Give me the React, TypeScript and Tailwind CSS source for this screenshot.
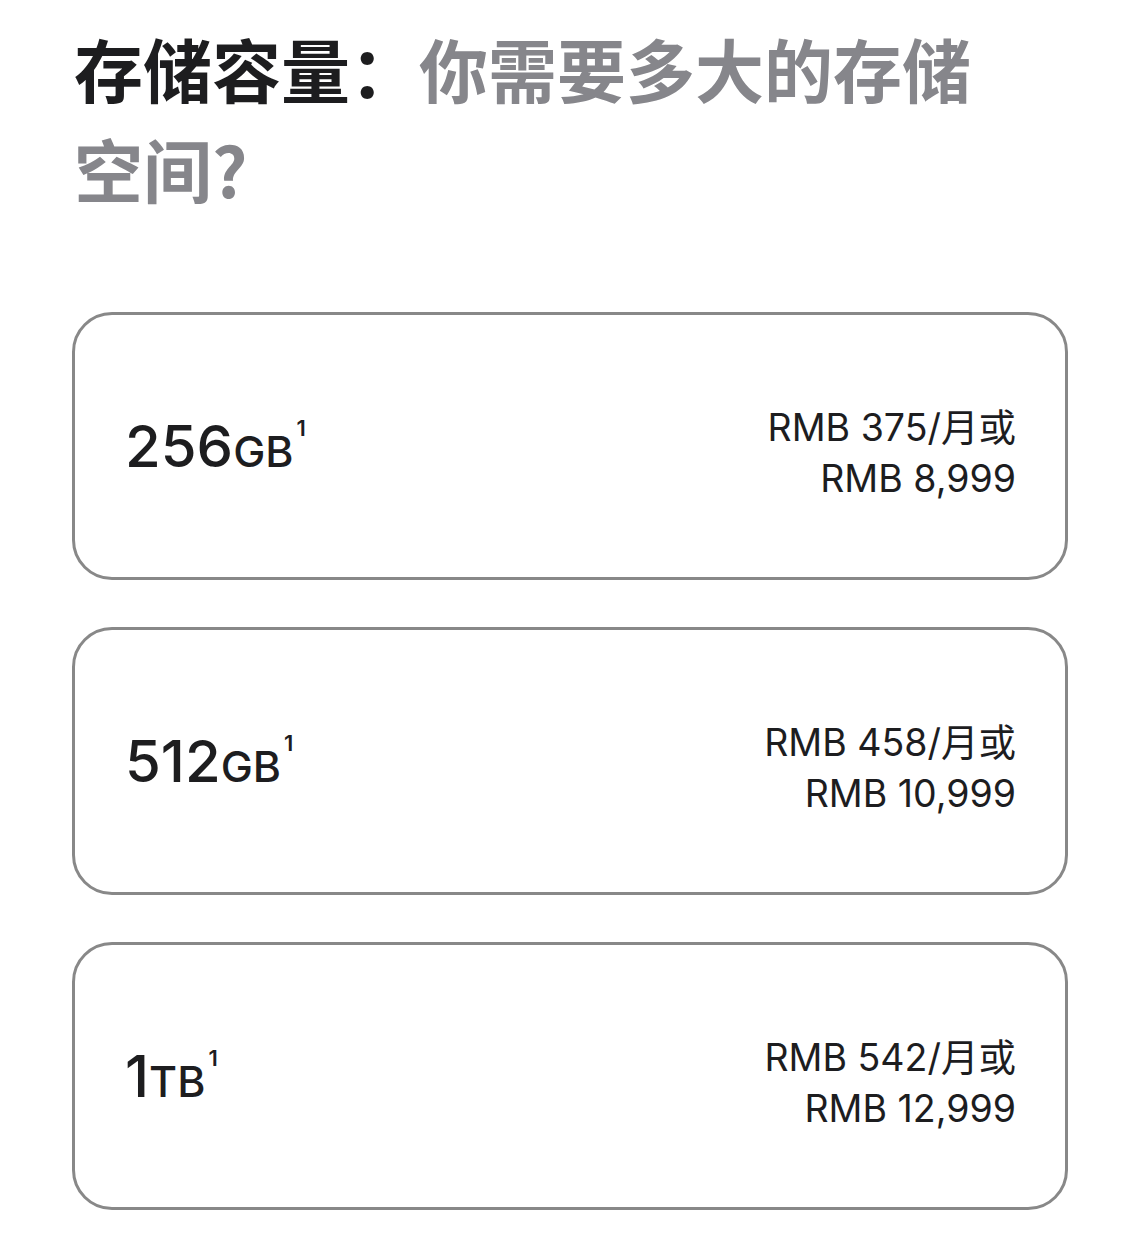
const options = [
  { size: "256", unit: "GB", monthly: "375", total: "8,999" },
  { size: "512", unit: "GB", monthly: "458", total: "10,999" },
  { size: "1", unit: "TB", monthly: "542", total: "12,999" },
];

export default function App() {
  return (
    <main
      className="min-h-screen bg-white px-[72px] pt-[18px] text-[#1d1d1f]"
      style={{ fontFamily: 'Inter, "Noto Sans CJK SC", sans-serif' }}
    >
      <h1
        className="w-[930px] pl-[2px] text-[69px] font-bold leading-[100px]"
        style={{ fontFamily: '"Noto Sans CJK SC", sans-serif' }}
      >
        存储容量：<span className="text-[#86868b]">你需要多大的存储空间?</span>
      </h1>

      <div className="mt-[94px] flex flex-col gap-[47px]">
        {options.map((opt) => (
          <div
            key={opt.size}
            className="flex h-[268px] items-center justify-between rounded-[40px] border-[3px] border-[#888888] pl-[50px] pr-[49px]"
          >
            <p className="flex items-baseline font-medium">
              <span className="text-[58px] leading-none">{opt.size}</span>
              <span className="text-[43px] leading-none">{opt.unit}</span>
              <span className="ml-[3px] self-start text-[22px] font-semibold leading-none">1</span>
            </p>
            <p className="pt-[14px] text-right text-[37.5px] leading-[51px]">
              RMB {opt.monthly}/月或
              <br />
              RMB {opt.total}
            </p>
          </div>
        ))}
      </div>
    </main>
  );
}
